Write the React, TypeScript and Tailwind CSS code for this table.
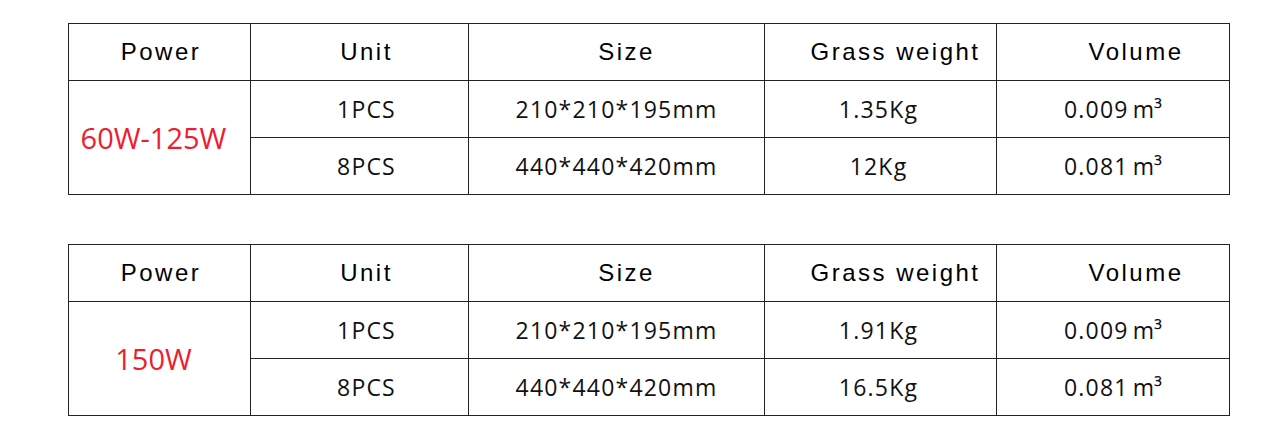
import React from "react";

type Row = { unit: string; size: string; weight: string; volume: string };
type Spec = { power: string; rows: Row[] };

const specs: Spec[] = [
  {
    power: "60W-125W",
    rows: [
      { unit: "1PCS", size: "210*210*195mm", weight: "1.35Kg", volume: "0.009" },
      { unit: "8PCS", size: "440*440*420mm", weight: "12Kg", volume: "0.081" },
    ],
  },
  {
    power: "150W",
    rows: [
      { unit: "1PCS", size: "210*210*195mm", weight: "1.91Kg", volume: "0.009" },
      { unit: "8PCS", size: "440*440*420mm", weight: "16.5Kg", volume: "0.081" },
    ],
  },
];

const head =
  "bg-white flex items-center justify-center h-[56px] text-[24px] tracking-[2.5px] text-black font-['Liberation_Sans',Arial,sans-serif]";
const cell =
  "bg-white flex items-center justify-center h-[56px] text-[23px] tracking-[1.2px] text-[#111] font-['Open_Sans',sans-serif]";

function SpecTable({ spec }: { spec: Spec }) {
  return (
    <div className="grid grid-cols-[181px_217px_295px_231px_232px] grid-rows-[56px_56px_56px] gap-px bg-[#222] border border-[#222] w-[1162px]">
      <div className={`${head} pl-[3px]`}>Power</div>
      <div className={`${head} pl-[14px]`}>Unit</div>
      <div className={`${head} pl-[20px]`}>Size</div>
      <div className={`${head} pl-[30px]`}>Grass weight</div>
      <div className={`${head} pl-[46px]`}>Volume</div>
      <div className="row-span-2 bg-white flex items-center justify-center pr-[12px] text-[29px] font-medium text-[#ee1d2f] font-['Open_Sans',sans-serif]">
        {spec.power}
      </div>
      {spec.rows.map((r, i) => (
        <React.Fragment key={i}>
          <div className={`${cell} pl-[14px]`}>{r.unit}</div>
          <div className={cell}>{r.size}</div>
          <div className={`${cell} pr-[4px]`}>{r.weight}</div>
          <div className={cell}>
            {r.volume}
            <span className="ml-[4px] tracking-normal">m³</span>
          </div>
        </React.Fragment>
      ))}
    </div>
  );
}

export default function App() {
  return (
    <div className="w-[1273px] h-[446px] bg-white pt-[23px] pl-[68px] flex flex-col gap-[49px]">
      {specs.map((s, i) => (
        <SpecTable key={i} spec={s} />
      ))}
    </div>
  );
}
